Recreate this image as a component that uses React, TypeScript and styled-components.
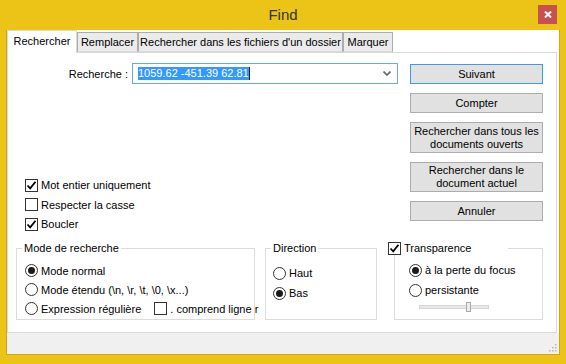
import React from "react";
import styled, { createGlobalStyle } from "styled-components";

const GlobalStyle = createGlobalStyle`
  html, body {
    margin: 0;
    padding: 0;
  }
  body {
    font-family: "Liberation Sans", Arial, sans-serif;
    font-size: 11px;
    color: #000;
  }
  * {
    box-sizing: border-box;
  }
`;

const Window = styled.div`
  width: 566px;
  height: 364px;
  background: #ecc317;
  display: flex;
  flex-direction: column;
  overflow: hidden;
`;

const TitleBar = styled.div`
  height: 30px;
  display: grid;
  grid-template-columns: 1fr auto 1fr;
  align-items: center;
`;

const Title = styled.div`
  grid-column: 2;
  font-size: 15px;
  line-height: 30px;
  color: #33352a;
`;

const CloseButton = styled.div`
  grid-column: 3;
  justify-self: end;
  align-self: start;
  margin: 5px 9px 0 0;
  width: 19px;
  height: 19px;
  background: #c75050;
  display: flex;
  align-items: center;
  justify-content: center;
`;

const Client = styled.div`
  margin-left: 6px;
  width: 554px;
  height: 325px;
  border: 1px solid #d0a70f;
  border-top: none;
  background: #ffffff;
  display: flex;
  flex-direction: column;
`;

const TabStrip = styled.div`
  height: 22px;
  display: flex;
  align-items: flex-end;
`;

const Tab = styled.div<{ $w: number; $active?: boolean }>`
  width: ${(p) => p.$w}px;
  height: ${(p) => (p.$active ? 23 : 20)}px;
  margin-bottom: ${(p) => (p.$active ? -1 : 0)}px;
  position: relative;
  z-index: ${(p) => (p.$active ? 1 : 0)};
  border: 1px solid ${(p) => (p.$active ? "#d9d9d9" : "#acacac")};
  border-bottom: ${(p) => (p.$active ? "none" : "1px solid #d9d9d9")};
  background: ${(p) => (p.$active ? "#ffffff" : "#ebebeb")};
  display: flex;
  align-items: ${(p) => (p.$active ? "flex-start" : "center")};
  justify-content: center;
  padding-top: ${(p) => (p.$active ? 4 : 0)}px;
  white-space: nowrap;
`;

const TabPage = styled.div`
  width: 550px;
  height: 281px;
  border: 1px solid #d9d9d9;
  display: flex;
  flex-direction: column;
  padding: 10px 13px 0 0;
`;

const TopArea = styled.div`
  display: flex;
`;

const LeftCol = styled.div`
  flex: 1;
  display: flex;
  flex-direction: column;
`;

const SearchRow = styled.div`
  display: flex;
  align-items: center;
  gap: 4px;
  height: 21px;
`;

const SearchLabel = styled.div`
  width: 120px;
  text-align: right;
`;

const Combo = styled.div`
  flex: 1;
  height: 21px;
  border: 1px solid #6aa9e9;
  display: flex;
  align-items: center;
  padding: 0 6px 0 5px;
`;

const Selected = styled.span`
  background: #3399ff;
  color: #ffffff;
  line-height: 13px;
  border-right: 1px solid #222;
`;

const Chevron = styled.svg`
  margin-left: auto;
`;

const Options = styled.div`
  margin: 91px 0 0 17px;
  display: flex;
  flex-direction: column;
`;

const OptionRow = styled.div<{ $h?: number }>`
  height: ${(p) => p.$h ?? 20}px;
  display: flex;
  align-items: center;
  gap: 3px;
  white-space: nowrap;
`;

const Box = styled.span`
  width: 13px;
  height: 13px;
  border: 1px solid #333333;
  background: #ffffff;
  display: inline-flex;
  align-items: center;
  justify-content: center;
  flex-shrink: 0;
`;

const Radio = styled.span`
  width: 13px;
  height: 13px;
  border-radius: 50%;
  border: 1px solid #333333;
  background: #ffffff;
  display: inline-flex;
  align-items: center;
  justify-content: center;
  flex-shrink: 0;
`;

const Dot = styled.span`
  width: 7px;
  height: 7px;
  border-radius: 50%;
  background: #1a1a1a;
`;

const ButtonCol = styled.div`
  width: 133px;
  margin: 1px 0 0 12px;
  display: flex;
  flex-direction: column;
  gap: 9px;
`;

const Button = styled.div<{ $h?: number; $default?: boolean }>`
  height: ${(p) => p.$h ?? 20}px;
  border: 1px solid ${(p) => (p.$default ? "#3c9bf0" : "#adadad")};
  background: #e1e1e1;
  display: flex;
  align-items: center;
  justify-content: center;
  text-align: center;
  line-height: 13px;
  padding: 0 2px;
`;

const GroupsRow = styled.div`
  display: flex;
  margin: 7px 0 0 8px;
`;

const Group = styled.fieldset<{ $w: number; $gap?: number }>`
  width: ${(p) => p.$w}px;
  height: 79px;
  margin: 0 0 0 ${(p) => p.$gap ?? 0}px;
  padding: 0;
  border: 1px solid #dcdcdc;
  min-width: 0;
`;

const Legend = styled.legend<{ $offset?: number; $w?: number }>`
  margin-left: ${(p) => p.$offset ?? 5}px;
  padding: 0 2px;
  line-height: 14px;
  height: 14px;
  width: ${(p) => (p.$w ? `${p.$w}px` : "auto")};
  display: flex;
  align-items: center;
  gap: 3px;
  white-space: nowrap;
`;

const GroupBody = styled.div<{ $top: number; $left: number }>`
  padding: ${(p) => p.$top}px 0 0 ${(p) => p.$left}px;
  display: flex;
  flex-direction: column;
`;

const InlineBox = styled(Box)`
  margin-left: 10px;
`;

const Slider = styled.div`
  margin: 2px 0 0 10px;
  width: 70px;
  height: 10px;
  position: relative;
  display: flex;
  align-items: center;
`;

const Track = styled.div`
  width: 100%;
  height: 4px;
  background: #e7eaea;
  border: 1px solid #d6d6d6;
`;

const Thumb = styled.div`
  position: absolute;
  left: 47px;
  top: 0;
  width: 5px;
  height: 10px;
  background: #ececec;
  border: 1px solid #a8a8a8;
`;

const BottomStrip = styled.div`
  flex: 1;
  background: #f0f0f0;
  display: flex;
  justify-content: flex-end;
  align-items: flex-end;
  padding: 0 2px 2px 0;
`;

const Check = () => (
  <svg width="11" height="11" viewBox="0 0 11 11">
    <path d="M1.5 5.5 L4.2 8.3 L9.5 1.8" fill="none" stroke="#000" strokeWidth="1.8" />
  </svg>
);

const CheckBox = ({ checked }: { checked?: boolean }) => (
  <Box>{checked && <Check />}</Box>
);

const RadioBtn = ({ on }: { on?: boolean }) => <Radio>{on && <Dot />}</Radio>;

const Grip = () => (
  <svg width="10" height="10" viewBox="0 0 10 10">
    {[
      [8, 2],
      [5, 5],
      [8, 5],
      [2, 8],
      [5, 8],
      [8, 8],
    ].map(([x, y]) => (
      <rect key={`${x}-${y}`} x={x} y={y} width="1.5" height="1.5" fill="#b8b8b8" />
    ))}
  </svg>
);

export default function App() {
  return (
    <>
      <GlobalStyle />
      <Window>
        <TitleBar>
          <Title>Find</Title>
          <CloseButton>
            <svg width="8" height="7" viewBox="0 0 8 7">
              <path d="M1 0.5 L7 6.5 M7 0.5 L1 6.5" stroke="#fff" strokeWidth="2" />
            </svg>
          </CloseButton>
        </TitleBar>

        <Client>
          <TabStrip>
            <Tab $w={70} $active>
              Rechercher
            </Tab>
            <Tab $w={61}>Remplacer</Tab>
            <Tab $w={205}>Rechercher dans les fichiers d'un dossier</Tab>
            <Tab $w={50}>Marquer</Tab>
          </TabStrip>

          <TabPage>
            <TopArea>
              <LeftCol>
                <SearchRow>
                  <SearchLabel>Recherche :</SearchLabel>
                  <Combo>
                    <Selected>1059.62 -451.39 62.81</Selected>
                    <Chevron width="8" height="5" viewBox="0 0 8 5">
                      <path d="M0.5 0.5 L4 4 L7.5 0.5" fill="none" stroke="#606060" strokeWidth="1.6" />
                    </Chevron>
                  </Combo>
                </SearchRow>

                <Options>
                  <OptionRow>
                    <CheckBox checked />
                    Mot entier uniquement
                  </OptionRow>
                  <OptionRow $h={19}>
                    <CheckBox />
                    Respecter la casse
                  </OptionRow>
                  <OptionRow>
                    <CheckBox checked />
                    Boucler
                  </OptionRow>
                </Options>
              </LeftCol>

              <ButtonCol>
                <Button $default>Suivant</Button>
                <Button>Compter</Button>
                <Button $h={31}>
                  Rechercher dans tous les
                  <br />
                  documents ouverts
                </Button>
                <Button $h={30}>
                  Rechercher dans le
                  <br />
                  document actuel
                </Button>
                <Button>Annuler</Button>
              </ButtonCol>
            </TopArea>

            <GroupsRow>
              <Group $w={239}>
                <Legend>Mode de recherche</Legend>
                <GroupBody $top={6} $left={8}>
                  <OptionRow $h={19}>
                    <RadioBtn on />
                    Mode normal
                  </OptionRow>
                  <OptionRow $h={19}>
                    <RadioBtn />
                    Mode étendu (\n, \r, \t, \0, \x...)
                  </OptionRow>
                  <OptionRow $h={19}>
                    <RadioBtn />
                    Expression régulière
                    <InlineBox />
                    . comprend ligne r
                  </OptionRow>
                </GroupBody>
              </Group>

              <Group $w={112} $gap={10}>
                <Legend>Direction</Legend>
                <GroupBody $top={8} $left={7}>
                  <OptionRow>
                    <RadioBtn />
                    Haut
                  </OptionRow>
                  <OptionRow>
                    <RadioBtn on />
                    Bas
                  </OptionRow>
                </GroupBody>
              </Group>

              <Group $w={149} $gap={17}>
                <Legend $offset={-9} $w={122}>
                  <CheckBox checked />
                  Transparence
                </Legend>
                <GroupBody $top={5} $left={14}>
                  <OptionRow>
                    <RadioBtn on />à la perte du focus
                  </OptionRow>
                  <OptionRow>
                    <RadioBtn />
                    persistante
                  </OptionRow>
                  <Slider>
                    <Track />
                    <Thumb />
                  </Slider>
                </GroupBody>
              </Group>
            </GroupsRow>
          </TabPage>

          <BottomStrip>
            <Grip />
          </BottomStrip>
        </Client>
      </Window>
    </>
  );
}
